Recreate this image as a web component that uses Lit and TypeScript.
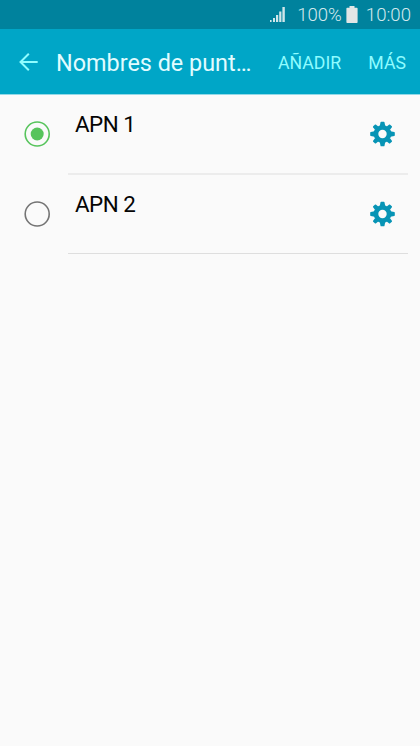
import { LitElement, html, css, svg } from "lit";
import { customElement, property, state } from "lit/decorators.js";
import { classMap } from "lit/directives/class-map.js";

const quarterTurns = [0, 90, 180, 270];

@customElement("status-bar")
class StatusBar extends LitElement {
  static styles = css`
    :host {
      display: flex;
      height: 29px;
      box-sizing: border-box;
      align-items: center;
      justify-content: flex-end;
      padding: 1px 9px 0 0;
      background: #00829d;
      color: #d5e9ed;
      font: 300 18.600px/26px Roboto, sans-serif;
    }
    .signal { margin: 0 12px 1px 0; }
    .battery { margin: 0 8px 2px 4px; }
    svg { display: block; flex: none; }
  `;
  render() {
    return html`
      <svg class="signal" width="15" height="15" viewBox="0 0 15 15" fill="#d0e6ea">
        <rect x="0" y="13" width="1.6" height="2" />
        <rect x="3" y="11" width="2" height="4" />
        <rect x="6" y="8" width="2.2" height="7" />
        <rect x="9.2" y="4.5" width="2.2" height="10.5" />
        <rect x="12.4" y="0" width="2.4" height="15" />
      </svg>
      <span>100%</span>
      <svg class="battery" width="12" height="17" viewBox="0 0 12 17" fill="#e2e6e6">
        <path d="M3.5 0h5v1.7h2.3q.8 0 .8.8v13.7q0 .8-.8.8H1.2q-.8 0-.8-.8V2.500q0-.8.8-.8h2.300z" />
      </svg>
      <span>10:00</span>
    `;
  }
}

@customElement("action-bar")
class ActionBar extends LitElement {
  static styles = css`
    :host {
      display: flex;
      height: 66px;
      box-sizing: border-box;
      align-items: center;
      padding: 0 14px 0 19px;
      background: #00a6c7;
      border-bottom: 1px solid #93d9e7;
      font-family: Roboto, sans-serif;
      color: #8ffcff;
    }
    svg { display: block; flex: none; margin-right: 18px; }
    .title {
      flex: none;
      width: 203px;
      margin: 3px 19px 0 0;
      font-size: 23.4px;
      line-height: 30px;
      color: #e2fcff;
      white-space: nowrap;
    }
    .action { margin-top: 2px; font-size: 17.7px; line-height: 24px; white-space: nowrap; }
    .action + .action { margin-left: auto; }
  `;
  render() {
    return html`
      <svg width="19" height="18" viewBox="0 0 19 18" fill="none" stroke="#8ffcff" stroke-width="2">
        <path d="M9.800.7 1.500 9l8.300 8.300M1.500 9H18.700" />
      </svg>
      <span class="title">Nombres de punt…</span>
      <span class="action">AÑADIR</span>
      <span class="action">MÁS</span>
    `;
  }
}

@customElement("apn-row")
class ApnRow extends LitElement {
  @property() name = "";
  @property({ type: Boolean }) selected = false;

  static styles = css`
    :host { display: flex; height: 79px; padding: 0 12px 0 24px; font-family: Roboto, sans-serif; }
    :host(:first-of-type) { height: 80px; }
    svg { display: block; flex: none; }
    .mark { margin: 26px 18px 0 0; }
    .ring { fill: none; stroke: #747474; stroke-width: 1.6; }
    .on .ring { stroke: #57c45c; }
    .dot { fill: #57c45c; }
    .body {
      flex: 1;
      display: flex;
      justify-content: space-between;
      box-sizing: border-box;
      padding: 0 12px 0 7px;
      border-bottom: 1px solid #dedede;
    }
    :host(:first-of-type) .body { border-bottom: 2px solid #ececec; }
    .name { margin-top: 14px; font-size: 22.4px; line-height: 30px; letter-spacing: -0.5px; color: #050505; }
    .gear { margin-top: 26px; color: #0794b5; }
  `;
  render() {
    return html`
      <svg class=${classMap({ mark: true, on: this.selected })} width="26" height="26" viewBox="0 0 26 26">
        <circle class="ring" cx="13.200" cy="13" r="12" />
        ${this.selected ? svg`<circle class="dot" cx="13.200" cy="13" r="6.500" />` : ""}
      </svg>
      <div class="body">
        <span class="name">${this.name}</span>
        <svg class="gear" width="26" height="26" viewBox="-12.500 -13 26 26">
          <circle r="6.550" fill="none" stroke="currentColor" stroke-width="4.700" />
          ${quarterTurns.map(
            (a) => svg`<g fill="currentColor" transform="rotate(${a})">
              <path d="M-2.700-8-2-11.700q.1-.6.700-.6h2.600q.6 0 .7.600L2.700-8z" />
              <path transform="rotate(45)" d="M-2.400-8-1.900-11.400q.1-.6.700-.6h2.400q.6 0 .7.600L2.400-8z" />
            </g>`
          )}
        </svg>
      </div>
    `;
  }
}

@customElement("app-root")
class AppRoot extends LitElement {
  @state() private apns = [
    { name: "APN 1", selected: true },
    { name: "APN 2", selected: false },
  ];

  static styles = css`
    :host { display: block; min-height: 100vh; background: #fafafa; }
  `;
  render() {
    return html`
      <status-bar></status-bar>
      <action-bar></action-bar>
      ${this.apns.map((a) => html`<apn-row .name=${a.name} .selected=${a.selected}></apn-row>`)}
    `;
  }
}
